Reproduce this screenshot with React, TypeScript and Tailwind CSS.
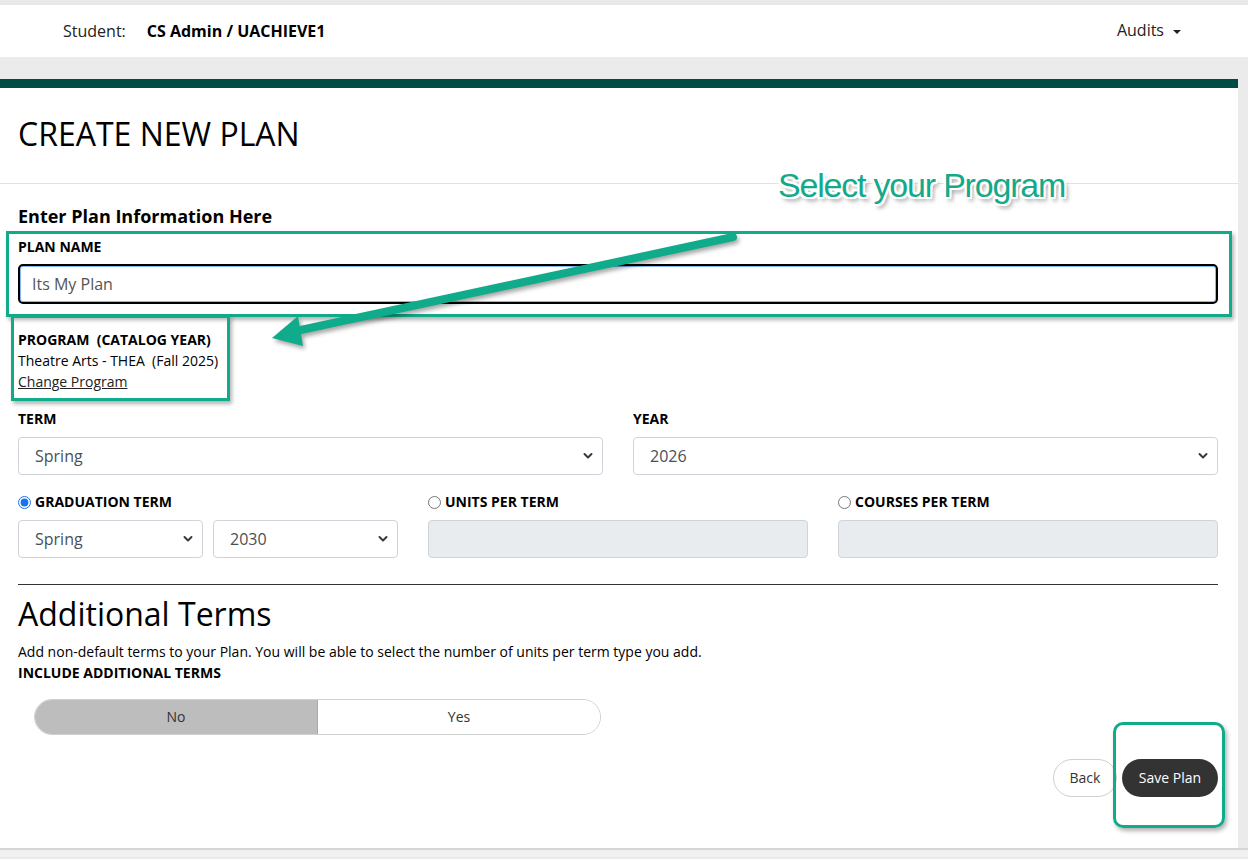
import React from 'react';

const Chevron: React.FC = () => (
  <svg className="pointer-events-none absolute right-[10px] top-1/2 -translate-y-1/2" width="10" height="7" viewBox="0 0 10 7">
    <path d="M1.5 1.5 L5 5 L8.5 1.5" fill="none" stroke="#343a40" strokeWidth="2" strokeLinecap="round" strokeLinejoin="round" />
  </svg>
);

const Select: React.FC<{ value: string; options: string[] }> = ({ value, options }) => (
  <div className="relative">
    <select
      defaultValue={value}
      className="h-[38px] w-full appearance-none rounded-[4px] border border-[#ced4da] bg-white pl-4 pr-8 text-base text-[#495057] outline-none"
    >
      {options.map(o => (
        <option key={o}>{o}</option>
      ))}
    </select>
    <Chevron />
  </div>
);

export default function App() {
  return (
    <div className="relative min-h-[859px] w-[1248px] overflow-hidden bg-[#ebebeb] font-['Open_Sans',sans-serif] text-black">
      {/* Top bar */}
      <div className="h-[5px] bg-[#e9e9e9]" />
      <header className="flex h-[52px] items-center bg-white pl-[63px] pr-[67px] text-base">
        <span className="text-[#222]">Student:</span>
        <span className="ml-[21px] font-bold">CS Admin / UACHIEVE1</span>
        <div className="ml-auto flex items-center gap-[9px] text-[#222]">
          <span className="-mt-[2px]">Audits</span>
          <span className="mt-[1px] h-0 w-0 border-x-[4px] border-t-[4px] border-x-transparent border-t-[#222]" />
        </div>
      </header>
      <div className="h-[22px]" />

      {/* Main panel */}
      <main className="w-[1238px] border-t-[9px] border-[#004c44] bg-white">
        <div className="px-[18px] pb-[29px] pt-[26px]">
          <h1 className="text-[32px] leading-[40px] text-black">CREATE NEW PLAN</h1>
        </div>
        <div className="h-px bg-[#e2e2e2]" />

        <div className="pb-[51px] pl-[18px] pr-[20px] pt-[20px]">
          <h2 className="text-[18px] font-bold leading-[24px]">Enter Plan Information Here</h2>

          <div className="mt-[9px] text-sm font-bold leading-[20px]">PLAN NAME</div>
          <input
            defaultValue="Its My Plan"
            className="mt-[7px] h-[40px] w-full rounded-[5px] border-2 border-black bg-white pl-[12px] text-base text-[#555] shadow-[inset_0_0_0_1px_#8ab6f5] outline-none"
          />

          <div className="mt-[25px] text-sm leading-[21px]">
            <div className="font-bold">PROGRAM&nbsp; (CATALOG YEAR)</div>
            <div>Theatre Arts - THEA&nbsp; (Fall 2025)</div>
            <a href="#" className="text-[#222] underline">Change Program</a>
          </div>

          <div className="mt-[17px] grid grid-cols-2 gap-x-[30px]">
            <div>
              <div className="text-sm font-bold leading-[20px]">TERM</div>
              <div className="mt-[8px]">
                <Select value="Spring" options={['Spring', 'Summer', 'Fall', 'Winter']} />
              </div>
            </div>
            <div>
              <div className="text-sm font-bold leading-[20px]">YEAR</div>
              <div className="mt-[8px]">
                <Select value="2026" options={['2025', '2026', '2027']} />
              </div>
            </div>
          </div>

          <div className="mt-[17px] grid grid-cols-3 gap-x-[30px]">
            <div>
              <label className="flex items-center gap-[4px] text-sm font-bold leading-[20px]">
                <input type="radio" name="grad" defaultChecked className="h-[13px] w-[13px] accent-[#1a73e8]" />
                GRADUATION TERM
              </label>
              <div className="mt-[8px] grid grid-cols-2 gap-[10px]">
                <Select value="Spring" options={['Spring', 'Summer', 'Fall', 'Winter']} />
                <Select value="2030" options={['2028', '2029', '2030', '2031']} />
              </div>
            </div>
            <div>
              <label className="flex items-center gap-[4px] text-sm font-bold leading-[20px]">
                <input type="radio" name="grad" className="h-[13px] w-[13px]" />
                UNITS PER TERM
              </label>
              <div className="mt-[8px] h-[38px] rounded-[4px] border border-[#ced4da] bg-[#e9ecef]" />
            </div>
            <div>
              <label className="flex items-center gap-[4px] text-sm font-bold leading-[20px]">
                <input type="radio" name="grad" className="h-[13px] w-[13px]" />
                COURSES PER TERM
              </label>
              <div className="mt-[8px] h-[38px] rounded-[4px] border border-[#ced4da] bg-[#e9ecef]" />
            </div>
          </div>

          <div className="mt-[26px] h-px bg-[#333]" />

          <h2 className="mt-[9px] text-[32px] leading-[40px]">Additional Terms</h2>
          <p className="mt-[7px] text-sm leading-[21px]">
            Add non-default terms to your Plan. You will be able to select the number of units per term type you add.
          </p>
          <div className="text-sm font-bold leading-[21px]">INCLUDE ADDITIONAL TERMS</div>

          <div className="ml-[16px] mt-[16px] flex h-[36px] w-[567px] overflow-hidden rounded-full border border-[#cfcfcf] text-sm text-[#333]">
            <button className="flex-1 border-r border-[#a9a9a9] bg-[#bdbdbd]">No</button>
            <button className="flex-1 bg-white">Yes</button>
          </div>

          <div className="mt-[24px] flex justify-end gap-[5px]">
            <button className="h-[38px] w-[64px] rounded-full border border-[#d0d0d0] bg-white text-sm text-[#333]">Back</button>
            <button className="h-[38px] w-[96px] rounded-full bg-[#333] text-sm font-medium text-white">Save Plan</button>
          </div>
        </div>
      </main>
      <div className="h-[2px] bg-[#d6d6d6]" />
      <div className="h-[7px] bg-[#f1f1f1]" />

      {/* Annotations */}
      <div className="pointer-events-none absolute left-[6px] top-[231px] h-[86px] w-[1226px] border-[3px] border-[#10ab8b] shadow-[2px_3px_4px_rgba(0,0,0,0.3)]" />
      <div className="pointer-events-none absolute left-[11px] top-[315px] h-[86px] w-[219px] border-[3px] border-[#10ab8b] shadow-[2px_3px_4px_rgba(0,0,0,0.3)]" />
      <div className="pointer-events-none absolute left-[1113px] top-[722px] h-[106px] w-[112px] rounded-[10px] border-[3px] border-[#10ab8b] shadow-[2px_3px_4px_rgba(0,0,0,0.3)]" />

      <div className="pointer-events-none absolute left-[778px] top-[163px] text-[34px] leading-[44px] tracking-[-1.2px] text-[#14a98a] font-['Liberation_Sans',Arial,sans-serif] [text-shadow:-2px_0_0_#fff,2px_0_0_#fff,0_-2px_0_#fff,0_2px_0_#fff,-2px_-2px_0_#fff,2px_-2px_0_#fff,-2px_2px_0_#fff,2px_2px_0_#fff,3px_4px_4px_rgba(0,0,0,0.45)]">
        Select your Program
      </div>

      <svg className="pointer-events-none absolute left-0 top-0 drop-shadow-[2px_3px_2px_rgba(0,0,0,0.35)]" width="1248" height="859">
        <line x1="733" y1="237" x2="296" y2="331" stroke="#10ab8b" strokeWidth="8" strokeLinecap="round" />
        <polygon points="272,338 298,316 303,346" fill="#10ab8b" />
      </svg>
    </div>
  );
}
